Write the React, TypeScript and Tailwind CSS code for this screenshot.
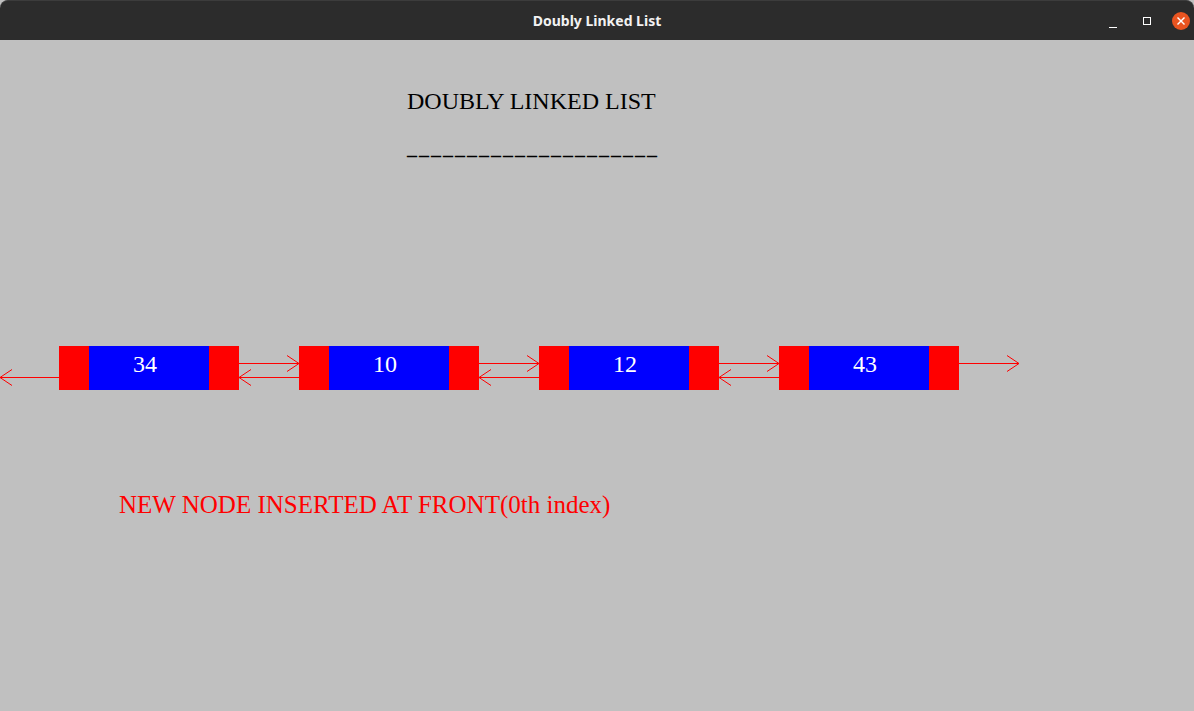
import React from "react";

const nodes = [34, 10, 12, 43];

// short red strokes between boxes, drawn with svg
function Link({ next = true, prev = true }: { next?: boolean; prev?: boolean }) {
  return (
    <svg width="60" height="44" className="shrink-0" shapeRendering="crispEdges">
      {next && (
        <g stroke="#ff0000" strokeWidth="1" fill="none">
          <line x1="0" y1="17.5" x2="60" y2="17.5" />
          <polyline points="48,9.5 60,17.5 48,25.5" shapeRendering="auto" />
        </g>
      )}
      {prev && (
        <g stroke="#ff0000" strokeWidth="1" fill="none">
          <line x1="0" y1="31.5" x2="60" y2="31.5" />
          <polyline points="12,23.5 0,31.5 12,39.5" shapeRendering="auto" />
        </g>
      )}
    </svg>
  );
}

function Node({ value }: { value: number }) {
  return (
    <div className="flex h-[44px] w-[180px] shrink-0">
      <div className="w-[30px] bg-[#ff0000]" />
      <div className="flex w-[120px] items-center justify-center bg-[#0000ff] pb-[8px] pr-[8px]">
        <span className="text-[24px] leading-none text-white">{value}</span>
      </div>
      <div className="w-[30px] bg-[#ff0000]" />
    </div>
  );
}

export default function App() {
  return (
    <div
      className="flex h-[711px] w-[1194px] flex-col overflow-hidden bg-[#c0c0c0]"
      style={{ fontFamily: '"Liberation Serif", "Times New Roman", serif' }}
    >
      {/* Window title bar */}
      <div className="relative flex h-[40px] shrink-0 items-center justify-center rounded-t-[8px] border-t border-[#3c3c3c] bg-[#2c2c2c]">
        <span
          className="text-[14px] font-bold text-[#f2f2f2]"
          style={{ fontFamily: '"Noto Sans", "DejaVu Sans", sans-serif' }}
        >
          Doubly Linked List
        </span>
        <div className="absolute right-[4px] top-0 flex h-full items-center">
          <div className="flex h-[20px] w-[34px] items-end justify-center pb-[3px]">
            <div className="h-px w-[8px] bg-white" />
          </div>
          <div className="flex w-[34px] justify-center">
            <div className="h-[8px] w-[8px] border border-white" />
          </div>
          <div className="ml-[8px] flex h-[18px] w-[18px] items-center justify-center rounded-full bg-[#e95420]">
            <svg width="8" height="8" viewBox="0 0 8 8" stroke="white" strokeWidth="1.4">
              <line x1="0.5" y1="0.5" x2="7.5" y2="7.5" />
              <line x1="7.5" y1="0.5" x2="0.5" y2="7.5" />
            </svg>
          </div>
        </div>
      </div>

      {/* Canvas */}
      <div className="flex flex-1 flex-col pt-[49px]">
        <div className="pl-[407px] text-[24px] leading-none text-black">DOUBLY LINKED LIST</div>
        <div className="mt-[24px] h-[24px] pl-[407px] text-[20px] font-bold leading-none tracking-[2px] text-black">
          _____________________
        </div>

        <div className="mt-[185px] flex">
          <svg width="59" height="44" className="shrink-0" shapeRendering="crispEdges">
            <g stroke="#ff0000" strokeWidth="1" fill="none">
              <line x1="0" y1="31.5" x2="59" y2="31.5" />
              <polyline points="12,23.5 0,31.5 12,39.5" shapeRendering="auto" />
            </g>
          </svg>
          {nodes.map((v, i) => (
            <React.Fragment key={i}>
              <Node value={v} />
              {i < nodes.length - 1 ? <Link /> : <Link prev={false} />}
            </React.Fragment>
          ))}
        </div>

        <div className="mt-[102px] pl-[119px] text-[25px] leading-none text-[#ff0000]">
          NEW NODE INSERTED AT FRONT(0th index)
        </div>
      </div>
    </div>
  );
}
